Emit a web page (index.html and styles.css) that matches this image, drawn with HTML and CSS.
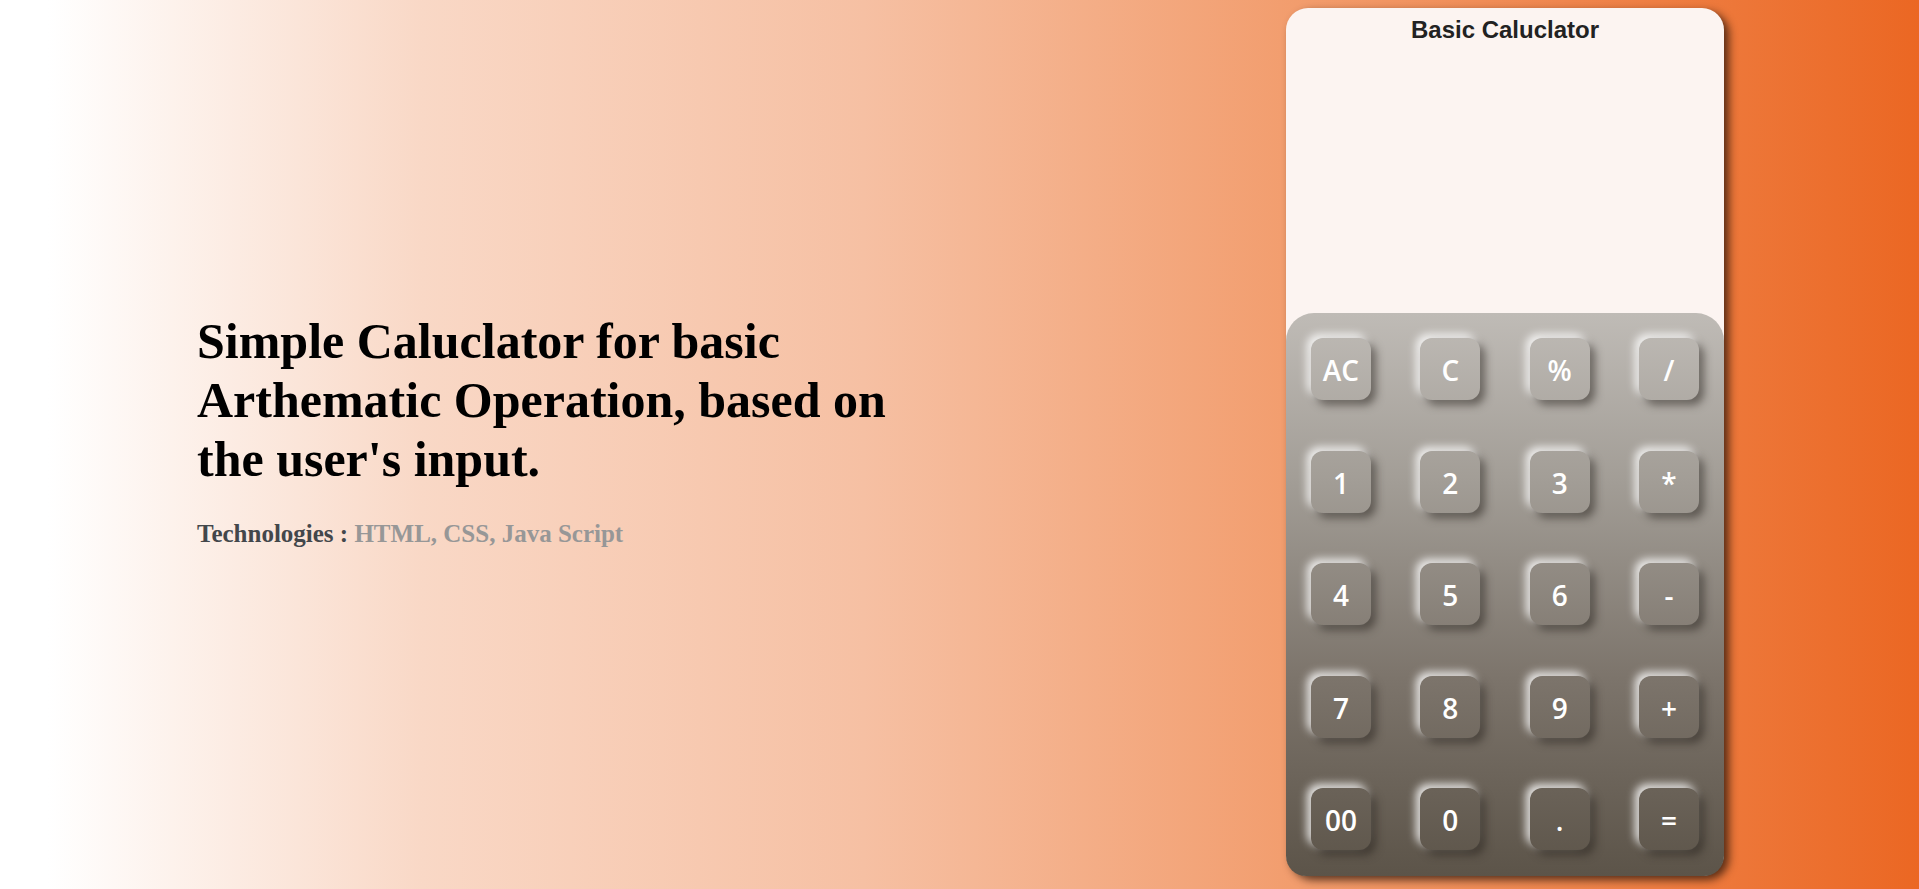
FILE: index.html
```html
<!DOCTYPE html>
<html lang="en">
<head>
<meta charset="UTF-8">
<title>Basic Caluclator</title>
<link rel="stylesheet" href="styles.css">
</head>
<body>
<main class="page">
  <section class="intro">
    <h1 class="intro-title">Simple Caluclator for basic Arthematic Operation, based on the user's input.</h1>
    <p class="intro-tech">Technologies : <span class="intro-tech-list">HTML, CSS, Java Script</span></p>
  </section>
  <section class="calc">
    <div class="calc-display">
      <h2 class="calc-title">Basic Caluclator</h2>
    </div>
    <div class="calc-keys">
      <button class="key">AC</button>
      <button class="key">C</button>
      <button class="key">%</button>
      <button class="key">/</button>
      <button class="key">1</button>
      <button class="key">2</button>
      <button class="key">3</button>
      <button class="key">*</button>
      <button class="key">4</button>
      <button class="key">5</button>
      <button class="key">6</button>
      <button class="key">-</button>
      <button class="key">7</button>
      <button class="key">8</button>
      <button class="key">9</button>
      <button class="key">+</button>
      <button class="key">00</button>
      <button class="key">0</button>
      <button class="key">.</button>
      <button class="key">=</button>
    </div>
  </section>
</main>
</body>
</html>
```
FILE: styles.css
```css
html, body {
  margin: 0;
  padding: 0;
  height: 100%;
}
body {
  background: linear-gradient(to right, #ffffff 2.5%, #f9d8c6 22%, #f6c0a3 45%, #f29c6c 68%, #eb6723 100%);
  overflow: hidden;
}
.page {
  display: flex;
  height: 889px;
  box-sizing: border-box;
  padding: 8px 0 13px 197px;
}
.intro {
  width: 720px;
  padding-top: 304px;
}
.intro-title {
  font-family: "Liberation Serif", "Times New Roman", serif;
  font-weight: bold;
  font-size: 50px;
  line-height: 59px;
  color: #000;
  margin: 0 0 31px 0;
}
.intro-tech {
  font-family: "Liberation Serif", "Times New Roman", serif;
  font-weight: bold;
  font-size: 25px;
  color: #43474b;
  margin: 0;
}
.intro-tech-list {
  color: #979797;
}
.calc {
  margin-left: 369px;
  width: 438px;
  height: 868px;
  display: flex;
  flex-direction: column;
  border-radius: 22px;
  background: #fcf4f1;
  box-shadow: 5px 4px 9px rgba(40, 20, 10, 0.75);
}
.calc-display {
  height: 305px;
  border-radius: 22px 22px 0 0;
}
.calc-title {
  margin: 0;
  padding-top: 8px;
  text-align: center;
  font-family: "Liberation Sans", Arial, sans-serif;
  font-weight: bold;
  font-size: 24px;
  line-height: 28px;
  color: #222;
}
.calc-keys {
  flex: 1;
  display: grid;
  grid-template-columns: repeat(4, 60px);
  grid-template-rows: repeat(5, 62px);
  justify-content: space-between;
  align-content: space-between;
  padding: 25px 25px 26px 25px;
  border-radius: 28px 28px 20px 20px;
  background: linear-gradient(to bottom, #bfbbb6 0%, #a29d96 30%, #7c746b 65%, #5c5449 100%);
}
.key {
  width: 60px;
  height: 62px;
  border: none;
  border-radius: 12px;
  background: transparent;
  color: #fff;
  font-family: "Open Sans", "Noto Sans", sans-serif;
  font-weight: 600;
  font-size: 28px;
  padding: 2px 0 0 0;
  box-shadow: 5px 5px 8px rgba(40, 35, 30, 0.55), -4px -4px 8px rgba(255, 255, 255, 0.85);
  cursor: pointer;
}
```
